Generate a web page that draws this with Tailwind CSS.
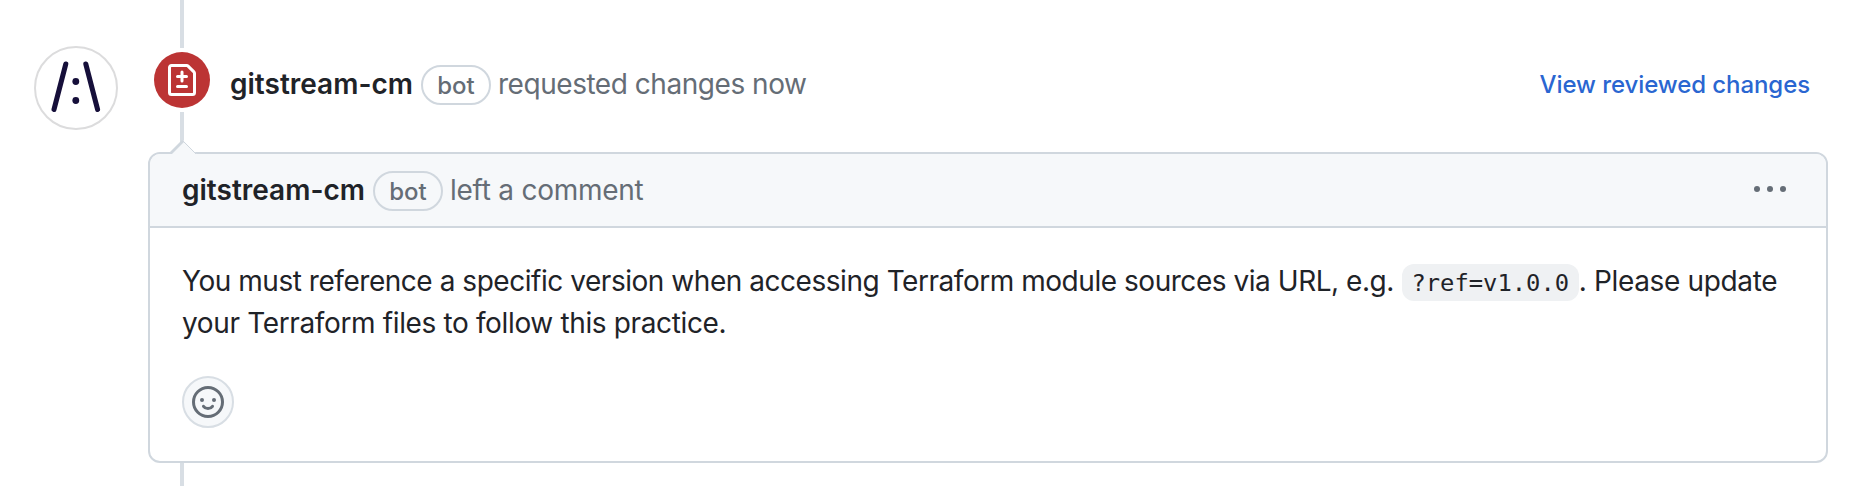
<!DOCTYPE html>
<html lang="en">
<head>
<meta charset="utf-8">
<title>Review</title>
<script src="https://cdn.jsdelivr.net/npm/@tailwindcss/browser@4"></script>
</head>
<body class="overflow-hidden bg-white font-['Inter',sans-serif] text-[28px] leading-[42px] text-[#1f2328]">
<div class="flex h-[486px] w-[1866px] overflow-hidden">
  <div class="w-[148px] shrink-0 pt-[46px] pl-[34px]">
    <svg class="block size-[84px]" viewBox="0 0 84 84" fill="none">
      <circle cx="42" cy="42" r="41" stroke="#dcdcdd" stroke-width="2"/>
      <path d="M31.800 18 20 63.500M51.800 18 63.600 63.500" stroke="#160f3a" stroke-width="5" stroke-linecap="round"/>
      <circle cx="41.800" cy="35.500" r="3.400" fill="#160f3a"/><circle cx="41.800" cy="54.500" r="3.400" fill="#160f3a"/>
    </svg>
  </div>
  <div class="w-[1680px] shrink-0">
    <div class="flex h-[152px]">
      <div class="flex w-[68px] shrink-0 flex-col items-center">
        <div class="h-12 w-1 bg-[#d8dee4]"></div>
        <div class="my-1 flex size-14 shrink-0 items-center justify-center rounded-full bg-[#bc3434]">
          <svg class="size-8" viewBox="0 0 16 16" fill="#fff"><path d="M1 1.750C1 .784 1.784 0 2.750 0h7.586c.464 0 .909.184 1.237.513l2.914 2.914c.329.328.513.773.513 1.237v9.586A1.750 1.750 0 0 1 13.250 16H2.750A1.750 1.750 0 0 1 1 14.250Zm1.750-.25a.25.25 0 0 0-.25.25v12.500c0 .138.112.25.25.25h10.500a.25.25 0 0 0 .25-.25V4.664a.25.25 0 0 0-.073-.177l-2.914-2.914a.25.25 0 0 0-.177-.073ZM8 3.250a.75.75 0 0 1 .75.75v1.500h1.500a.75.75 0 0 1 0 1.500h-1.500v1.500a.75.75 0 0 1-1.500 0V7h-1.500a.75.75 0 0 1 0-1.500h1.500V4A.75.75 0 0 1 8 3.250Zm-3 8a.75.75 0 0 1 .75-.75h4.500a.75.75 0 0 1 0 1.500h-4.500a.75.75 0 0 1-.75-.75Z"/></svg>
        </div>
        <div class="w-1 grow bg-[#d8dee4]"></div>
      </div>
      <div class="mt-[65px] flex h-10 grow items-center pl-[14px]">
        <span class="mb-[2px] w-[191px] font-semibold whitespace-nowrap">gitstream-cm</span>
        <span class="flex h-10 w-[70px] items-center justify-center rounded-full border-2 border-[#d0d7de] pt-[2px] text-2xl font-medium text-[#656d76]">bot</span>
        <span class="mb-[2px] ml-[7px] tracking-[-0.46px] whitespace-nowrap text-[#656d76]">requested changes now</span>
        <a class="mr-[18px] ml-auto text-2xl font-medium tracking-[-0.08px] whitespace-nowrap text-[#2a66d1]">View reviewed changes</a>
      </div>
    </div>
    <div class="relative h-[311px] rounded-xl border-2 border-[#d0d7de]">
      <svg class="absolute -top-[15px] left-[16px] h-[16px] w-[32px]" viewBox="0 0 32 16"><path d="M3 16 17.500 1.500 30.500 15V16Z" fill="#f6f8fa"/><path d="M2 15 16 1 18 3 6 15Z" fill="#d0d7de"/><path d="M17 2 30 15" stroke="#d0d7de" stroke-width="1"/></svg>
      <div class="flex h-[74px] items-center rounded-t-[10px] border-b-2 border-[#d0d7de] bg-[#f6f8fa] pl-8">
        <span class="w-[191px] font-semibold whitespace-nowrap">gitstream-cm</span>
        <span class="mt-[2px] flex h-10 w-[70px] items-center justify-center rounded-full border-2 border-[#d0d7de] pt-[2px] text-2xl font-medium text-[#656d76]">bot</span>
        <span class="ml-[7px] tracking-[-0.25px] whitespace-nowrap text-[#656d76]">left a comment</span>
        <svg class="mr-10 mb-[2px] ml-auto size-8" viewBox="0 0 16 16" fill="#656d76"><circle cx="1.500" cy="8" r="1.500"/><circle cx="8" cy="8" r="1.500"/><circle cx="14.500" cy="8" r="1.500"/></svg>
      </div>
      <div class="px-8 pt-8">
        <p class="whitespace-nowrap"><span class="tracking-[-0.46px]">You must reference a specific version when accessing Terraform module sources via URL, e.g.</span> <code class="rounded-xl bg-[#eff1f3] px-[9.700px] pt-[5px] pb-[4px] font-['DejaVu_Sans_Mono',monospace] text-[23.800px] leading-none">?ref=v1.0.0</code><span class="tracking-[-0.35px]">. Please update</span><br><span class="tracking-[-0.36px]">your Terraform files to follow this practice.</span></p>
        <div class="mt-8 flex size-[52px] items-center justify-center rounded-full border-2 border-[#d8dee4] bg-[#f6f8fa]">
          <svg class="size-8" viewBox="0 0 32 32" fill="none" stroke="#656d76" stroke-width="3" stroke-linecap="round"><circle cx="16" cy="16" r="14.500"/><path d="M11.500 20.300C13.500 23.200 18.500 23.200 20.500 20.300"/><circle cx="10" cy="14" r="2" fill="#656d76" stroke="none"/><circle cx="22" cy="14" r="2" fill="#656d76" stroke="none"/></svg>
        </div>
      </div>
    </div>
    <div class="ml-8 h-[23px] w-1 bg-[#d8dee4]"></div>
  </div>
</div>
</body>
</html>
